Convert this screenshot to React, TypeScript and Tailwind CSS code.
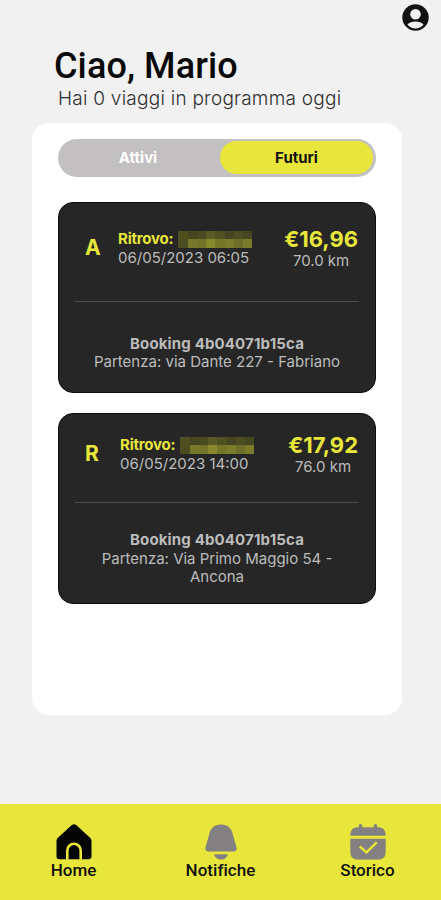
import { useState } from 'react'
import clsx from 'clsx'

interface Trip {
  id: string
  type: string
  date: string
  price: string
  distance: string
  booking: string
  departure: string
  headerClass: string
  textClass: string
  bodyClass: string
}

const trips: Trip[] = [
  {
    id: 'a',
    type: 'A',
    date: '06/05/2023 06:05',
    price: '€16,96',
    distance: '70.0 km',
    booking: '4b04071b15ca',
    departure: 'via Dante 227 - Fabriano',
    headerClass: 'h-[99px] pt-[27px]',
    textClass: 'ml-[17px]',
    bodyClass: 'pt-[32.5px]',
  },
  {
    id: 'r',
    type: 'R',
    date: '06/05/2023 14:00',
    price: '€17,92',
    distance: '76.0 km',
    booking: '4b04071b15ca',
    departure: 'Via Primo Maggio 54 - Ancona',
    headerClass: 'h-[89px] pt-[22px]',
    textClass: 'ml-[19px]',
    bodyClass: 'pt-[28px]',
  },
]

// tiles of the pixelated pickup address
const mosaic = [
  'bg-[#50501f]', 'bg-[#45451f]', 'bg-[#4b4b22]', 'bg-[#5a5b24]', 'bg-[#505123]', 'bg-[#454523]', 'bg-[#4d4e24]', 'bg-[#454622]',
  'bg-[#4c4d20]', 'bg-[#77782a]', 'bg-[#737429]', 'bg-[#88892d]', 'bg-[#757628]', 'bg-[#7c7d2b]', 'bg-[#6d6e28]', 'bg-[#7b7c2b]',
]

function Mosaic() {
  return (
    <span className="ml-[5px] grid h-[17px] w-[74px] shrink-0 grid-cols-8 grid-rows-2">
      {mosaic.map((color, i) => (
        <span key={i} className={color} />
      ))}
    </span>
  )
}

function TripCard({ trip }: { trip: Trip }) {
  return (
    <article className="h-[191px] rounded-[15px] border border-[#0c0c0c] bg-[#262626] px-[16px] text-[#bcbcbc]">
      <div className={clsx('flex items-start border-b border-[#4d4d4d]', trip.headerClass)}>
        <span className="mt-[5px] ml-[10px] w-[16px] text-[21px] leading-[26px] font-bold text-[#e8e63a]">
          {trip.type}
        </span>
        <div className={trip.textClass}>
          <div className="flex items-center text-[15px] leading-[18px] font-bold tracking-[-0.2px] whitespace-nowrap text-[#e8e63a]">
            Ritrovo:
            <Mosaic />
          </div>
          <div className="pt-[1px] text-[15px] leading-[18px] whitespace-nowrap">{trip.date}</div>
        </div>
        <div className="mr-[1px] ml-auto text-center">
          <div className="-mt-[2px] text-[22px] leading-[22px] font-bold text-[#e8e63a]">{trip.price}</div>
          <div className="text-[15px] leading-[22px]">{trip.distance}</div>
        </div>
      </div>
      <div className={clsx('text-center text-[15px] leading-[18.5px]', trip.bodyClass)}>
        <p className="font-bold tracking-[0.15px]">Booking {trip.booking}</p>
        <p className="mx-auto max-w-[255px]">Partenza: {trip.departure}</p>
      </div>
    </article>
  )
}

function ProfileIcon() {
  return (
    <svg className="h-[27px] w-[27px]" viewBox="0 0 27 27" fill="none">
      <circle cx="13.5" cy="13.5" r="13.2" fill="#111" />
      <circle cx="13.5" cy="10.2" r="5.3" fill="#f1f1f1" />
      <path d="M5.400 20.500c1.900-2.100 4.800-3.100 8.100-3.100s6.200 1 8.100 3.100c-2.100 2.700-4.900 4-8.100 4s-6-1.300-8.100-4Z" fill="#f1f1f1" />
    </svg>
  )
}

function HomeIcon() {
  return (
    <svg className="h-9 w-9" viewBox="0 0 36 36" fill="none">
      <path d="M15.800 1.100a3.700 3.700 0 0 1 4.400 0L33.800 13.600c1.200 1.100 1.700 2.200 1.700 3.700v15.200c0 1.800-1 2.800-2.800 2.800H3.300C1.500 35.300.5 34.300.5 32.500V17.300c0-1.500.5-2.600 1.700-3.700Z" fill="#050505" />
      <path d="M11.300 35.400V26.500a6.700 6.700 0 0 1 13.400 0v8.900" stroke="#e8e63a" strokeWidth="2.600" />
    </svg>
  )
}

function BellIcon() {
  return (
    <svg className="h-9 w-9" viewBox="0 0 36 36" fill="#828080">
      <path d="M18 .5c6.600 0 10.800 4 11.900 10.200L33.400 23c.9 2.900-.5 4.500-3.400 4.500H6c-2.900 0-4.300-1.600-3.400-4.500l3.500-12.300C7.200 4.500 11.400.5 18 .5Z" />
      <path d="M11.200 30.200h13.600c-.5 3.200-3.300 5.300-6.800 5.300s-6.300-2.100-6.800-5.300Z" />
    </svg>
  )
}

function CalendarIcon() {
  return (
    <svg className="h-9 w-9" viewBox="0 0 36 36" fill="#828080">
      <path d="M.3 11.700C.3 5.800 2.900 3.300 8.700 3.300V1.900a1.800 1.800 0 0 1 3.600 0v1.400h11.400V1.900a1.800 1.800 0 0 1 3.600 0v1.400c5.800 0 8.400 2.500 8.400 8.400Z" />
      <path d="M.3 14.700h35.400v12.800c0 5.400-2.500 8-7.900 8H8.200c-5.400 0-7.900-2.600-7.900-8Z" />
      <path d="m9.800 22.500 6.700 5.800 10.200-10" fill="none" stroke="#e8e63a" strokeWidth="2.400" />
    </svg>
  )
}

const tabs = [
  { label: 'Attivi', widthClass: 'w-[159px]' },
  { label: 'Futuri', widthClass: 'w-[153px]' },
]

export default function App() {
  const [activeTab, setActiveTab] = useState('Futuri')

  return (
    <div className="flex h-[900px] w-[441px] flex-col overflow-hidden bg-[#f1f1f1] font-['Inter',sans-serif]">
      <header className="h-[123px] pt-[4px]">
        <div className="flex h-[27px] justify-end pr-[12px]">
          <button aria-label="Profilo">
            <ProfileIcon />
          </button>
        </div>
        <h1 className="mt-[14px] ml-[54px] font-['Roboto',sans-serif] text-[36px] leading-[42px] font-medium tracking-[0.1px] text-[#090909]">
          Ciao, Mario
        </h1>
        <p className="mt-[1px] ml-[58px] text-[19px] leading-[22px] font-light tracking-[0.25px] text-[#303030]">
          Hai 0 viaggi in programma oggi
        </p>
      </header>

      <main className="mr-[39px] ml-[32px] h-[592px] rounded-[17px] bg-white px-[26px] pt-[16px]">
        <div className="flex h-[38px] rounded-full bg-[#c2c0c1] px-[3px] pt-[2px] pb-[3px]">
          {tabs.map((tab) => (
            <button
              key={tab.label}
              onClick={() => setActiveTab(tab.label)}
              className={clsx(
                'rounded-full pt-[2px] text-[15px] font-bold',
                tab.widthClass,
                activeTab === tab.label ? 'bg-[#e8e63a] text-[#111]' : 'pr-[5px] text-white',
              )}
            >
              {tab.label}
            </button>
          ))}
        </div>
        <div className="mt-[25px] flex flex-col gap-[20px]">
          {trips.map((trip) => (
            <TripCard key={trip.id} trip={trip} />
          ))}
        </div>
      </main>

      <nav className="mt-auto grid h-[96px] grid-cols-3 bg-[#e8e63a] pt-[20px] font-['Roboto',sans-serif] text-[17px] leading-[20px] font-medium text-[#111]">
        <button className="flex flex-col items-center">
          <HomeIcon />
          Home
        </button>
        <button className="flex flex-col items-center">
          <BellIcon />
          <span className="tracking-[0.05px]">Notifiche</span>
        </button>
        <button className="flex flex-col items-center">
          <CalendarIcon />
          Storico
        </button>
      </nav>
    </div>
  )
}
